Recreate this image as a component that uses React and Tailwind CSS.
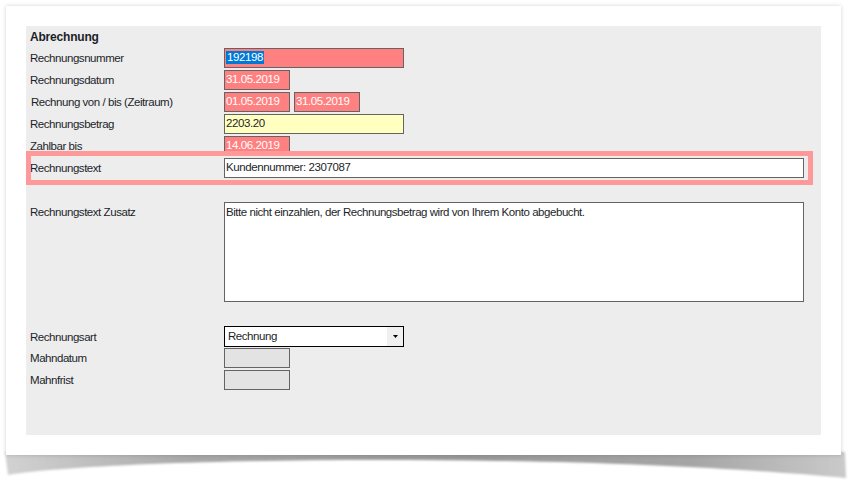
import React from "react";

const font = { fontFamily: '"Liberation Sans", Arial, sans-serif' };

// one label + field row of the form
const Row = ({ label, children, className = "h-5", labelClass = "" }) => (
  <div className={`flex items-center ${className}`}>
    <div className={`w-[194px] shrink-0 text-[11.5px] leading-[14px] tracking-[-0.45px] text-[#1c1f2a] ${labelClass}`}>
      {label}
    </div>
    {children}
  </div>
);

const Box = ({ className = "", children }) => (
  <div
    className={`h-5 border border-[#646464] px-[1px] text-[11.5px] leading-[17px] tracking-[-0.4px] whitespace-nowrap overflow-hidden ${className}`}
  >
    {children}
  </div>
);

export default function App() {
  return (
    <div className="relative w-[855px] h-[484px] bg-white overflow-hidden" style={font}>
      {/* curled paper shadow under the card */}
      <svg className="absolute left-0 top-0 z-0" width="855" height="484">
        <defs>
          <linearGradient id="sh" x1="0" x2="1" y1="0" y2="0">
            <stop offset="0" stopColor="#d2d2d2" />
            <stop offset="0.22" stopColor="#a8a8a8" />
            <stop offset="0.55" stopColor="#989898" />
            <stop offset="0.82" stopColor="#a6a6a6" />
            <stop offset="1" stopColor="#cacaca" />
          </linearGradient>
          <filter id="bl" x="-5%" y="-50%" width="110%" height="200%">
            <feGaussianBlur stdDeviation="1.3" />
          </filter>
        </defs>
        <path
          d="M5,452 L845,452 L846,478 C760,470 640,463 500,461 C380,459 250,460 150,464 C80,467 30,471 8,475 Z"
          fill="url(#sh)"
          filter="url(#bl)"
        />
      </svg>

      <div className="relative z-10 ml-[6px] mt-[6px] w-[835px] h-[449px] bg-white p-5 shadow-[0_0_4px_rgba(0,0,0,0.18)]">
        <div className="relative h-[409px] bg-[#ededed] pl-1 pt-1">
          <div className="h-[14px] mb-1 text-[12px] leading-[14px] font-bold text-[#1c1f2a] tracking-[-0.2px]">
            Abrechnung
          </div>

          <div className="flex flex-col gap-[2px]">
            <Row label="Rechnungsnummer">
              <Box className="w-[180px] bg-[#ff8080] text-white">
                <span className="bg-[#0078d7] inline-block leading-[13px] px-[1px] mt-[1px]">192198</span>
              </Box>
            </Row>
            <Row label="Rechnungsdatum">
              <Box className="w-[66px] bg-[#ff8080] text-white">31.05.2019</Box>
            </Row>
            <Row label="Rechnung von / bis (Zeitraum)" labelClass="pl-[1px]">
              <Box className="w-[66px] bg-[#ff8080] text-white">01.05.2019</Box>
              <Box className="w-[66px] ml-1 bg-[#ff8080] text-white">31.05.2019</Box>
            </Row>
            <Row label="Rechnungsbetrag">
              <Box className="w-[180px] bg-[#ffffc0] text-[#1c1f2a]">2203.20</Box>
            </Row>
            <Row label="Zahlbar bis">
              <Box className="w-[66px] bg-[#ff8080] text-white">14.06.2019</Box>
            </Row>
            <Row label="Rechnungstext">
              <Box className="w-[580px] bg-white text-[#1c1f2a]">Kundennummer: 2307087</Box>
            </Row>
          </div>

          <div className="flex items-start mt-6">
            <div className="w-[194px] shrink-0 pt-[3px] text-[11.5px] leading-[14px] tracking-[-0.45px] text-[#1c1f2a]">
              Rechnungstext Zusatz
            </div>
            <div className="w-[580px] h-[100px] bg-white border border-[#646464] px-[1px] pt-[2px] text-[11.5px] leading-[14px] tracking-[-0.45px] text-[#1c1f2a]">
              Bitte nicht einzahlen, der Rechnungsbetrag wird von Ihrem Konto abgebucht.
            </div>
          </div>

          <div className="flex flex-col mt-6">
            <Row label="Rechnungsart" className="h-[21px]">
              <div className="w-[180px] h-[21px] flex border border-black bg-white">
                <div className="flex-1 pl-[3px] text-[11.5px] leading-[19px] tracking-[-0.45px] text-[#1c1f2a]">
                  Rechnung
                </div>
                <div className="w-4 bg-[#f0f0f0] flex items-center justify-center">
                  <svg width="5" height="3" viewBox="0 0 5 3">
                    <polygon points="0,0 5,0 2.5,3" fill="#000" />
                  </svg>
                </div>
              </div>
            </Row>
            <Row label="Mahndatum" className="h-5 mt-[1px]">
              <Box className="w-[66px] bg-[#e3e3e3]" />
            </Row>
            <Row label="Mahnfrist" className="h-5 mt-[2px]">
              <Box className="w-[66px] bg-[#e3e3e3]" />
            </Row>
          </div>

          {/* highlight frame around the Rechnungstext row */}
          <div className="absolute left-0 top-[125px] w-[787px] h-[34px] border-[5px] border-[#ff9999] pointer-events-none" />
        </div>
      </div>
    </div>
  );
}
